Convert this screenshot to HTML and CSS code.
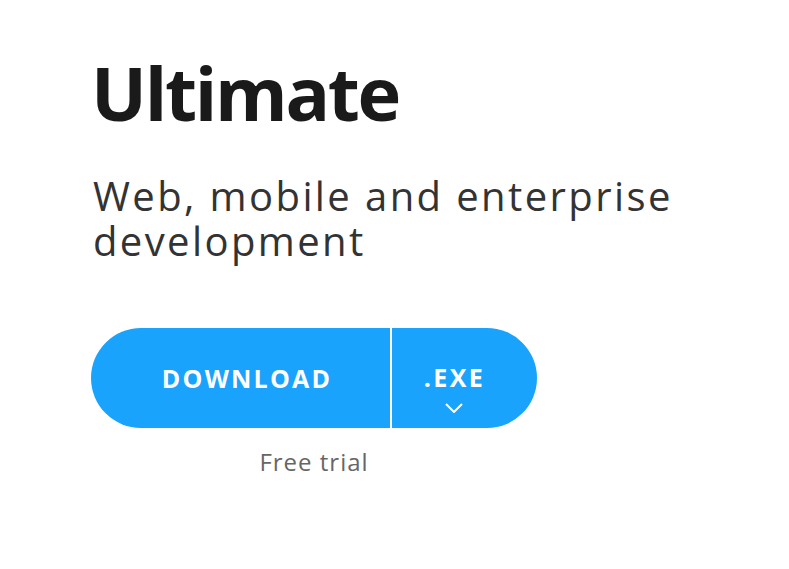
FILE: index.html
```html
<!DOCTYPE html>
<html lang="en">
<head>
<meta charset="utf-8">
<title>Ultimate</title>
<link rel="stylesheet" href="styles.css">
</head>
<body>
<main class="edition">
  <h1 class="edition-title">Ultimate</h1>
  <p class="edition-desc">Web, mobile and enterprise development</p>
  <div class="download">
    <div class="download-btn">
      <a class="download-main" href="#">DOWNLOAD</a>
      <span class="download-divider"></span>
      <button class="download-type" type="button">
        <span class="download-ext">.EXE</span>
        <svg class="chevron" width="18" height="10" viewBox="0 0 18 10" aria-hidden="true"><path d="M1 1 L9 9 L17 1" fill="none" stroke="#fff" stroke-width="2"/></svg>
      </button>
    </div>
    <div class="download-note">Free trial</div>
  </div>
</main>
</body>
</html>
```
FILE: styles.css
```css
html, body {
  margin: 0;
  padding: 0;
  background: #fff;
}
body {
  font-family: "Open Sans", "Noto Sans", sans-serif;
}
.edition {
  padding: 50px 0 0 91px;
}
.edition-title {
  margin: 0;
  font-size: 74px;
  line-height: 86px;
  font-weight: 700;
  color: #1a1a1a;
  letter-spacing: -2.3px;
}
.edition-desc {
  margin: 37px 0 0 2px;
  width: 640px;
  font-size: 40px;
  line-height: 45px;
  font-weight: 400;
  color: #333;
  letter-spacing: 2.4px;
}
.download {
  margin-top: 65px;
  width: 446px;
  display: flex;
  flex-direction: column;
}
.download-btn {
  display: flex;
  height: 100px;
  width: 446px;
  border-radius: 50px;
  overflow: hidden;
  background: #1aa3fc;
}
.download-main {
  width: 299px;
  display: flex;
  align-items: center;
  justify-content: center;
  padding-left: 13px;
  box-sizing: border-box;
  color: #fff;
  text-decoration: none;
  font-size: 25px;
  font-weight: 700;
  letter-spacing: 2.2px;
}
.download-divider {
  width: 2px;
  background: #fff;
}
.download-type {
  flex: 1;
  border: 0;
  background: transparent;
  color: #fff;
  display: flex;
  flex-direction: column;
  align-items: center;
  justify-content: flex-start;
  padding: 35px 22px 0 0;
  font-family: inherit;
  font-size: 25px;
  font-weight: 700;
  letter-spacing: 2.4px;
}
.download-ext {
  line-height: 28px;
  padding-left: 2px;
}
.chevron {
  margin-top: 12px;
}
.download-note {
  text-align: center;
  margin-top: 17px;
  font-size: 24px;
  letter-spacing: 1px;
  color: #666;
}
```
